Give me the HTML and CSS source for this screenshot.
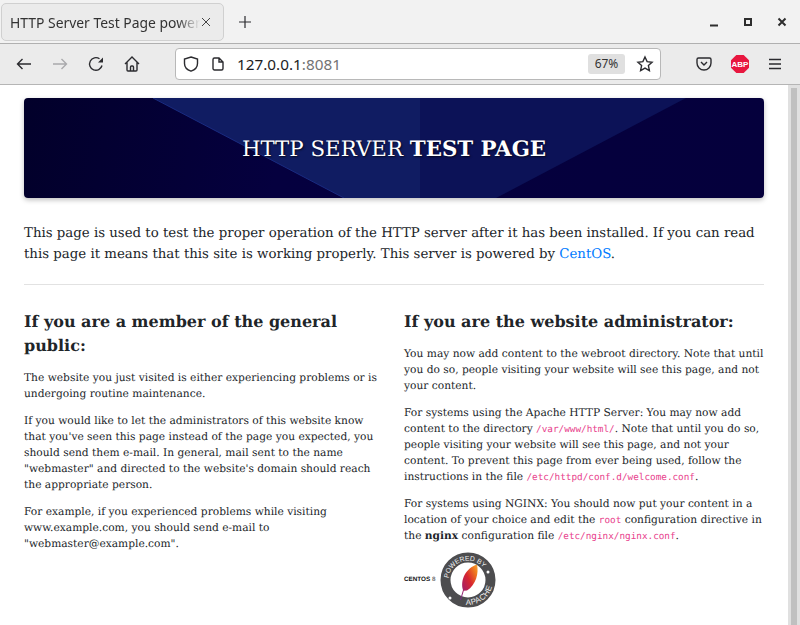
FILE: index.html
```html
<!DOCTYPE html>
<html lang="en">
<head>
    <meta charset="UTF-8">
    <meta name="viewport" content="width=device-width, initial-scale=1.0">
    <title>HTTP Server Test Page powered by CentOS</title>
    <link rel="stylesheet" href="styles.css">
</head>
<body>
    <div class="tabbar">
        <div class="tab">
            <span class="tab-title">HTTP Server Test Page powered by CentOS</span>
            <svg class="tab-close" width="10" height="10" viewBox="0 0 10 10"><path d="M1 1l8 8M9 1l-8 8"/></svg>
        </div>
        <svg class="new-tab" width="14" height="14" viewBox="0 0 14 14"><path d="M7 1v12M1 7h12"/></svg>
        <div class="window-controls">
            <svg width="10" height="10" viewBox="0 0 10 10"><path d="M1 8.500h8" class="thick"/></svg>
            <svg width="10" height="10" viewBox="0 0 10 10"><rect x="2" y="2" width="6" height="6" class="thick"/></svg>
            <svg width="10" height="10" viewBox="0 0 10 10"><path d="M1.500 1.500l7 7M8.500 1.500l-7 7" class="thick"/></svg>
        </div>
    </div>

    <div class="toolbar">
        <div class="nav-buttons">
            <svg width="16" height="16" viewBox="0 0 16 16"><path d="M15 8H1.500M6.500 3L1.500 8l5 5"/></svg>
            <svg class="disabled" width="16" height="16" viewBox="0 0 16 16"><path d="M1 8h13.500M9.500 3l5 5-5 5"/></svg>
            <svg width="16" height="16" viewBox="0 0 16 16">
                <path d="M14 9.500A6.300 6.300 0 1 1 11.500 2.800"/>
                <polygon class="solid" points="15,1.500 15,6.500 10,6.500"/>
            </svg>
            <svg width="16" height="16" viewBox="0 0 16 16"><path d="M1 8l7-7 7 7M3 6.500V14a1 1 0 0 0 1 1h8a1 1 0 0 0 1-1V6.500M6.500 15v-4a1 1 0 0 1 1-1h1a1 1 0 0 1 1 1v4"/></svg>
        </div>
        <div class="urlbar">
            <svg class="shield" width="16" height="16" viewBox="0 0 16 16"><path d="M8 1l6.500 2v4.500C14.500 11 11.500 14 8 15.200 4.500 14 1.500 11 1.500 7.500V3z"/></svg>
            <svg class="page-icon" width="12" height="14" viewBox="0 0 12 14"><path d="M2.500 1H7l4 4v6.500A1.500 1.500 0 0 1 9.500 13h-7A1.500 1.500 0 0 1 1 11.500v-9A1.500 1.500 0 0 1 2.500 1zM7 1v4h4"/></svg>
            <span class="url">127.0.0.1<span class="url-port">:8081</span></span>
            <span class="zoom-badge">67%</span>
            <svg class="star" width="18" height="18" viewBox="0 0 18 18"><path d="M9 2l2.100 4.600 5 .6-3.700 3.400 1 5L9 13.100l-4.400 2.500 1-5-3.700-3.400 5-.6z"/></svg>
        </div>
        <div class="toolbar-right">
            <svg width="16" height="16" viewBox="0 0 16 16"><path d="M2.500 2h11A1.500 1.500 0 0 1 15 3.500V7a7 7 0 0 1-14 0V3.500A1.500 1.500 0 0 1 2.500 2zM5 6l3 3 3-3"/></svg>
            <svg class="abp" width="18" height="18" viewBox="0 0 18 18">
                <polygon points="5.300,0 12.700,0 18,5.300 18,12.700 12.700,18 5.300,18 0,12.700 0,5.300"/>
                <text x="9" y="12" text-anchor="middle">ABP</text>
            </svg>
            <svg width="14" height="12" viewBox="0 0 14 12"><path d="M1 1.500h12M1 6h12M1 10.500h12"/></svg>
        </div>
    </div>

    <div class="viewport">
        <div class="page">
            <header class="banner">
                <svg class="banner-art" viewBox="0 0 740 100" preserveAspectRatio="none">
                    <polygon class="art-left" points="129,0 396,0 396,100 320,100"/>
                    <polygon class="art-right" points="396,0 662,0 472,100 396,100"/>
                    <path class="art-edge" d="M129 0L320 100"/>
                </svg>
                <h1>HTTP SERVER <strong>TEST PAGE</strong></h1>
            </header>

            <p class="lead">This page is used to test the proper operation of the HTTP server after it has been installed. If you can read this page it means that this site is working properly. This server is powered by <a href="#">CentOS</a>.</p>

            <hr>

            <div class="columns">
                <section>
                    <h2>If you are a member of the general public:</h2>
                    <p>The website you just visited is either experiencing problems or is undergoing routine maintenance.</p>
                    <p>If you would like to let the administrators of this website know that you've seen this page instead of the page you expected, you should send them e-mail. In general, mail sent to the name "webmaster" and directed to the website's domain should reach the appropriate person.</p>
                    <p>For example, if you experienced problems while visiting www.example.com, you should send e-mail to "webmaster@example.com".</p>
                </section>
                <section>
                    <h2>If you are the website administrator:</h2>
                    <p>You may now add content to the webroot directory. Note that until you do so, people visiting your website will see this page, and not your content.</p>
                    <p>For systems using the Apache HTTP Server: You may now add content to the directory <code>/var/www/html/</code>. Note that until you do so, people visiting your website will see this page, and not your content. To prevent this page from ever being used, follow the instructions in the file <code>/etc/httpd/conf.d/welcome.conf</code>.</p>
                    <p>For systems using NGINX: You should now put your content in a location of your choice and edit the <code>root</code> configuration directive in the <strong>nginx</strong> configuration file <code>/etc/nginx/nginx.conf</code>.</p>
                    <div class="logos">
                        <span class="centos-logo">CENTOS <span class="centos-ver">8</span></span>
                        <svg class="apache-logo" width="56" height="56" viewBox="0 0 56 56">
                            <defs>
                                <path id="ring-top" d="M8.600 26.300A19.500 19.500 0 0 1 45.700 19.800"/>
                                <path id="ring-bottom" d="M25.800 52.900A25 25 0 0 0 52.600 32.300"/>
                                <linearGradient id="feather" x1="0" y1="1" x2="1" y2="0">
                                    <stop offset="0" stop-color="#6f2c91"/>
                                    <stop offset="0.3" stop-color="#b01f5a"/>
                                    <stop offset="0.55" stop-color="#d8262f"/>
                                    <stop offset="0.85" stop-color="#f0801f"/>
                                    <stop offset="1" stop-color="#f9a93a"/>
                                </linearGradient>
                            </defs>
                            <circle class="ring" cx="28" cy="28" r="22.500"/>
                            <circle class="ring-dot" cx="10" cy="46" r="1.500"/>
                            <circle class="ring-dot" cx="48" cy="20" r="1.500"/>
                            <text class="ring-text"><textPath href="#ring-top">POWERED BY</textPath></text>
                            <text class="ring-text apache-word"><textPath href="#ring-bottom">APACHE</textPath></text>
                            <path class="feather" d="M20 48L23 38C20 28 26 16 37 12.500 39 21 36 33 27 38.500L23.800 38.800 21 48z"/>
                        </svg>
                    </div>
                </section>
            </div>
        </div>
        <div class="scrollbar"><div class="scroll-thumb"></div></div>
    </div>
</body>
</html>
```

FILE: styles.css
```css
* {
    box-sizing: border-box;
}
html, body {
    height: 100%;
}
body {
    margin: 0;
    display: flex;
    flex-direction: column;
    overflow: hidden;
    font-family: "DejaVu Serif", serif;
    background: #fff;
}
svg path, svg rect {
    fill: none;
    stroke: #2b2b2f;
    stroke-width: 1.4;
}
.solid {
    fill: #2b2b2f;
}

/* browser chrome */
.tabbar {
    height: 44px;
    flex: none;
    display: flex;
    align-items: center;
    padding: 3px 0 2px 1px;
    background: #f2f2f2;
    border-bottom: 1px solid #b0b0b0;
}
.tab {
    width: 223px;
    height: 38px;
    display: flex;
    align-items: center;
    padding: 0 12px 0 8px;
    background: #ebebeb;
    border: 1px solid #d0d0d0;
    border-radius: 5px;
}
.tab-title {
    flex: 1;
    overflow: hidden;
    white-space: nowrap;
    font: 13.9px "Noto Sans", sans-serif;
    color: #333;
    -webkit-mask-image: linear-gradient(to right, #000 88%, transparent);
    mask-image: linear-gradient(to right, #000 88%, transparent);
}
.tab-close {
    margin-left: 1px;
}
.tab-close path {
    stroke: #444;
    stroke-width: 1;
}
.new-tab {
    margin-left: 14px;
}
.new-tab path {
    stroke-width: 1.2;
}
.window-controls {
    margin-left: auto;
    display: flex;
    gap: 24px;
    padding-right: 13px;
}
.window-controls .thick {
    stroke-width: 2;
    stroke: #2e2e2e;
}

.toolbar {
    height: 41px;
    flex: none;
    display: flex;
    align-items: center;
    background: #ebebeb;
    border-bottom: 1px solid #b5b5b5;
}
.nav-buttons {
    width: 175px;
    display: flex;
    gap: 20px;
    padding-left: 16px;
}
.nav-buttons .disabled path {
    stroke: #a9a9ac;
}
.urlbar {
    width: 486px;
    height: 32px;
    display: flex;
    align-items: center;
    padding: 0 6px 0 7px;
    background: #fff;
    border: 1px solid #b8b8b8;
    border-radius: 4px;
}
.page-icon {
    margin-left: 13px;
}
.url {
    margin-left: 13px;
    font: 15.3px "Noto Sans", sans-serif;
    color: #1c1c1e;
}
.url-port {
    color: #737373;
}
.zoom-badge {
    margin-left: auto;
    width: 37px;
    height: 20px;
    text-align: center;
    font: 12px/20px "Noto Sans", sans-serif;
    color: #333;
    background: #e0e0e0;
    border-radius: 3px;
}
.star {
    margin-left: 11px;
}
.toolbar-right {
    flex: 1;
    display: flex;
    align-items: center;
    gap: 19px;
    padding-left: 35px;
}
.abp polygon {
    fill: #e8173f;
}
.abp text {
    font: bold 8px "Liberation Sans", sans-serif;
    fill: #fff;
}

.viewport {
    flex: 1;
    min-height: 0;
    display: flex;
}
.scrollbar {
    width: 12px;
    flex: none;
    padding: 3px 3px 0;
    background: #e0e0e0;
}
.scroll-thumb {
    width: 6px;
    height: 100%;
    background: #c0c0c0;
}

/* test page */
.page {
    flex: 1;
    min-width: 0;
    padding: 13px 24px 0;
    color: #212529;
    font-size: 10.67px;
    line-height: 16px;
    overflow: hidden;
    text-rendering: geometricPrecision;
}
.banner {
    position: relative;
    height: 100px;
    display: flex;
    align-items: center;
    justify-content: center;
    padding-top: 3px;
    overflow: hidden;
    background: linear-gradient(100deg, #02002a, #05003f 35%, #05003c);
    border-radius: 4px;
    box-shadow: 0 2px 5px rgba(0,0,0,0.25);
}
.banner-art {
    position: absolute;
    inset: 0;
    width: 100%;
    height: 100%;
}
.art-left {
    fill: #101c62;
}
.art-right {
    fill: #0c1257;
}
.banner-art .art-edge {
    stroke: #1a2b80;
    stroke-width: 1;
}
h1 {
    position: relative;
    margin: 0;
    font-size: 21.33px;
    font-weight: 400;
    color: #fff;
    text-shadow: 1px 1px 2px rgba(0,0,0,0.7);
}
.lead {
    margin: 24.5px 0 19px;
    font-size: 13.33px;
    line-height: 21.33px;
}
a {
    color: #007bff;
    text-decoration: none;
}
hr {
    margin: 0;
    border: 0;
    border-top: 1px solid #e2e2e2;
}
.columns {
    display: grid;
    grid-template-columns: 1fr 1fr;
    gap: 20px;
    margin-top: 24.5px;
}
h2 {
    margin: 0 0 12px;
    font-size: 16px;
    line-height: 24px;
    font-weight: 700;
}
p {
    margin: 0 0 11px;
}
code {
    font-family: "DejaVu Sans Mono", monospace;
    font-size: 9.33px;
    line-height: 1;
    color: #e83e8c;
}
.logos {
    display: flex;
    align-items: center;
    gap: 5px;
    margin-top: -3px;
}
.centos-logo {
    font: 800 6.3px "Liberation Sans", sans-serif;
    color: #111;
}
.centos-ver {
    color: #777;
}
.apache-logo .ring {
    fill: #fff;
    stroke: #4d4d4f;
    stroke-width: 10;
}
.ring-dot {
    fill: #fff;
}
.ring-text {
    font: 6.8px "Liberation Sans", sans-serif;
    fill: #f0f0f0;
}
.apache-word {
    font-size: 8px;
    letter-spacing: 0.4px;
}
.apache-logo .feather {
    fill: url(#feather);
    stroke: none;
}
```
